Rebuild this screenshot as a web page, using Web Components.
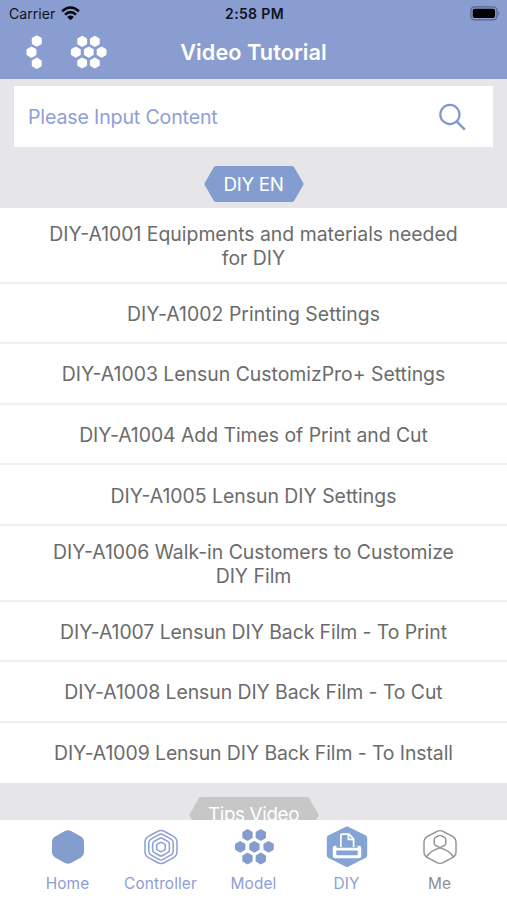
<!DOCTYPE html>
<html lang="en">
<head>
<meta charset="utf-8">
<title>Video Tutorial</title>
<style>
html,body{margin:0;height:100%;overflow:hidden}
body{font-family:Inter,"Liberation Sans",sans-serif;background:#e6e6e8}
</style>
</head>
<body>
<tutorial-app></tutorial-app>
<script>
const define=(name,html)=>customElements.define(name,class extends HTMLElement{
  constructor(){super();this.attachShadow({mode:'open'}).innerHTML=typeof html==='function'?html(this):html;}
});
// Pointy-top hexagon with half-width w and half-height h.
const hexagon=(cx,cy,w,h)=>`M${cx} ${cy-h}L${cx+w} ${cy-h/2}V${cy+h/2}L${cx} ${cy+h}L${cx-w} ${cy+h/2}V${cy-h/2}Z`;
const hex=(cx,cy,r)=>hexagon(cx,cy,r*.866,r);
// Hexagon outline with softened corners.
const softHex=(cx,cy,w,h,k)=>{
  const p=[[0,-h],[w,-h/2],[w,h/2],[0,h],[-w,h/2],[-w,-h/2]].map(q=>[q[0]+cx,q[1]+cy]);
  const near=(a,b)=>{const d=Math.hypot(b[0]-a[0],b[1]-a[1]);return `${a[0]+(b[0]-a[0])*k/d} ${a[1]+(b[1]-a[1])*k/d}`;};
  return p.map((a,i)=>`${i?'L':'M'}${near(a,p[(i+5)%6])}Q${a[0]} ${a[1]} ${near(a,p[(i+1)%6])}`).join('')+'Z';
};
const svg=(w,h,body)=>`<svg width="${w}" height="${h}" viewBox="0 0 ${w} ${h}" fill="none" stroke-linejoin="round">${body}</svg>`;
const cluster=(pts,r,c)=>`<path d="${pts.map(p=>hex(p[0],p[1],r)).join('')}" fill="${c}" stroke="${c}" stroke-width="2"/>`;
const B='#839dce';
const icons={
  back:svg(18,34,cluster([[11.8,6],[6.5,17.2],[11.8,28.3]],4.6,'#fff')),
  grid:svg(38,34,cluster([[12.2,6.3],[24.8,6.3],[5.8,17.2],[18.8,17.2],[31.6,17.2],[12.2,28],[24.8,28]],4.5,'#fff')),
  home:svg(44,44,`<path d="${softHex(22,22,16,17.6,4)}" fill="${B}"/>`),
  controller:svg(44,44,`<path d="${[[16,17.4],[12.2,13.5],[8.4,9.4],[4.3,4.9]].map(([w,h],i)=>softHex(22,22,w,h,[4,2.5,1.8,1.2][i])).join('')}" stroke="#8a9fd2" stroke-width="1.5"/>`),
  model:svg(44,44,cluster([[15.5,10],[28.8,10],[8.2,21.8],[22.4,21.8],[36.6,21.8],[15.5,33.5],[28.8,33.5]],4.8,B)),
  diy:svg(44,44,`<path d="${hexagon(22,21.7,17.7,17.8)}" fill="#83a4d5" stroke="#83a4d5" stroke-width="5"/>
    <path d="M15.9 22V10.5q0-1.3 1.3-1.3h6.8l4.6 4.6V22M23.4 9.5v4.9h5" stroke="#fff" stroke-width="1.7"/>
    <path d="M9.8 20.7h1.6v2h21.2v-2h1.6q2 0 2 2v8.6q0 2-2 2H9.8q-2 0-2-2v-8.6q0-2 2-2z" fill="#fff"/><rect x="11.3" y="25.5" width="21.4" height="4.7" rx=".8" fill="#83a4d5"/>`),
  me:svg(44,44,`<g stroke="#8f8f8f" stroke-width="1.4"><path d="${softHex(22,22,16,17.3,4)}"/><path d="${softHex(22,16.4,5.8,6.4,1.5)}"/><path d="M8.2 32.2Q13 25.2 22 22.9Q31 25.2 35.8 32.2"/></g>`)
};
define('hex-icon',e=>`<style>:host{display:block}svg{display:block}</style>${icons[e.getAttribute('name')]}`);

define('status-bar',`<style>
:host{display:grid;grid-template-columns:1fr auto 1fr;align-items:center;height:27px;padding:0 7px 0 9px;color:#10131d;font-size:14px}
.l{display:flex;align-items:center;gap:6px}.l span{letter-spacing:.05px}b{font-weight:600;font-size:14px;letter-spacing:.35px}.r{justify-self:end}svg{display:block}
</style><div class="l"><span>Carrier</span>${svg(19,15,'<g stroke="#05070c" stroke-width="2.5"><path d="M1.1 5.3Q9.5-2.3 17.9 5.3"/><path d="M4 8.6Q9.5 3.6 15 8.6"/></g><path d="M6.2 10.9Q9.5 8 12.8 10.9L9.5 14.2Z" fill="#05070c"/>')}</div><b>2:58 PM</b>
<div class="r">${svg(30,15,'<rect x=".9" y=".9" width="26" height="13" rx="3.6" stroke="#5a6687" stroke-width="1.2"/><rect x="2.7" y="2.7" width="22.4" height="9.4" rx="2" fill="#000"/><path d="M28.3 5.2q2 2.2 0 4.5z" fill="#5a6687"/>')}</div>`);

define('nav-bar',`<style>
:host{display:grid;grid-template-columns:1fr auto 1fr;align-items:center;height:50px;padding:0 25px;color:#fff}
.l{display:flex;gap:27px}h1{margin:0;font-size:21.7px;font-weight:600;letter-spacing:.05px;line-height:26px}
</style><div class="l"><hex-icon name="back"></hex-icon><hex-icon name="grid"></hex-icon></div><h1><slot></slot></h1><i></i>`);

define('search-box',`<style>
:host{display:flex;align-items:center;justify-content:space-between;box-sizing:border-box;height:61px;margin:7px 14px 0;padding:0 26px 0 14px;background:#fff;color:#8f9ed6;font-size:19.6px;letter-spacing:-.16px}
svg{display:block}
</style><span><slot></slot></span>${svg(30,30,'<circle cx="12.9" cy="12.5" r="9.6" stroke="#8297cc" stroke-width="2.2"/><path d="M19.6 19.4L27.8 27.6" stroke="#8297cc" stroke-width="2.5"/>')}`);

define('section-tag',e=>{
  const w=+e.getAttribute('w'),c=e.getAttribute('color');
  return `<style>
:host{display:flex;flex:none;justify-content:center;color:#fff;font-size:18.8px}
div{display:grid;place-items:center;width:${w}px;height:36px}svg,span{grid-area:1/1}
span{letter-spacing:${e.getAttribute('ls')||0}px}
</style><div>${svg(w,36,`<path d="M12 2.5H${w-12}L${w-3} 18L${w-12} 33.5H12L3 18Z" fill="${c}" stroke="${c}" stroke-width="5"/>`)}<span><slot></slot></span></div>`;});

define('video-row',e=>`<style>
:host{display:flex;align-items:center;justify-content:center;box-sizing:border-box;height:60.6px;padding:2px 40px 0;border-bottom:2px solid #efeff0;background:#fff;color:#6b6b6b;font-size:19.4px;line-height:24px;text-align:center;letter-spacing:${e.getAttribute('ls')||0}px}
:host([tall]){height:75.6px}:host(:last-of-type){border-bottom-color:#fff}
span{white-space:pre-line}
</style><span><slot></slot></span>`);

define('tab-item',e=>`<style>
:host{display:flex;flex:1;flex-direction:column;align-items:center;color:#8d9dd5;font-size:15.4px;line-height:20px;padding-top:5px;gap:5px}
:host([muted]){color:#8f8f8f}
span{letter-spacing:${e.getAttribute('ls')||.12}px}
</style><hex-icon name="${e.getAttribute('icon')}"></hex-icon><span><slot></slot></span>`);

define('tab-bar',`<style>:host{display:flex;flex:none;box-sizing:border-box;height:80px;padding:0 21px;background:#fff}</style><slot></slot>`);

define('tutorial-app',`<style>
:host{display:flex;flex-direction:column;height:900px;width:507px;background:#e6e6e8}
header{flex:none;height:79px;background:#899dd0}
main{flex:1;min-height:0;overflow:hidden}
.first{margin:19px 0 6px}.next{margin-top:13.4px}
</style>
<header><status-bar></status-bar><nav-bar>Video Tutorial</nav-bar></header>
<main>
<search-box>Please Input Content</search-box>
<section-tag class="first" w="100" ls="-.35" color="#839dd0">DIY EN</section-tag>
<div>
<video-row tall>DIY-A1001 Equipments and materials needed
for DIY</video-row>
<video-row ls=".05">DIY-A1002 Printing Settings</video-row>
<video-row>DIY-A1003 Lensun CustomizPro+ Settings</video-row>
<video-row ls="-.03">DIY-A1004 Add Times of Print and Cut</video-row>
<video-row>DIY-A1005 Lensun DIY Settings</video-row>
<video-row tall>DIY-A1006 Walk-in Customers to Customize
DIY Film</video-row>
<video-row ls="-.06">DIY-A1007 Lensun DIY Back Film - To Print</video-row>
<video-row ls="-.05">DIY-A1008 Lensun DIY Back Film - To Cut</video-row>
<video-row ls="-.07">DIY-A1009 Lensun DIY Back Film - To Install</video-row>
</div>
<section-tag class="next" w="130" ls="-.35" color="#c7c7c7">Tips Video</section-tag>
</main>
<tab-bar>
<tab-item icon="home">Home</tab-item><tab-item icon="controller">Controller</tab-item><tab-item icon="model">Model</tab-item><tab-item icon="diy">DIY</tab-item><tab-item icon="me" muted>Me</tab-item>
</tab-bar>`);
</script>
</body>
</html>
